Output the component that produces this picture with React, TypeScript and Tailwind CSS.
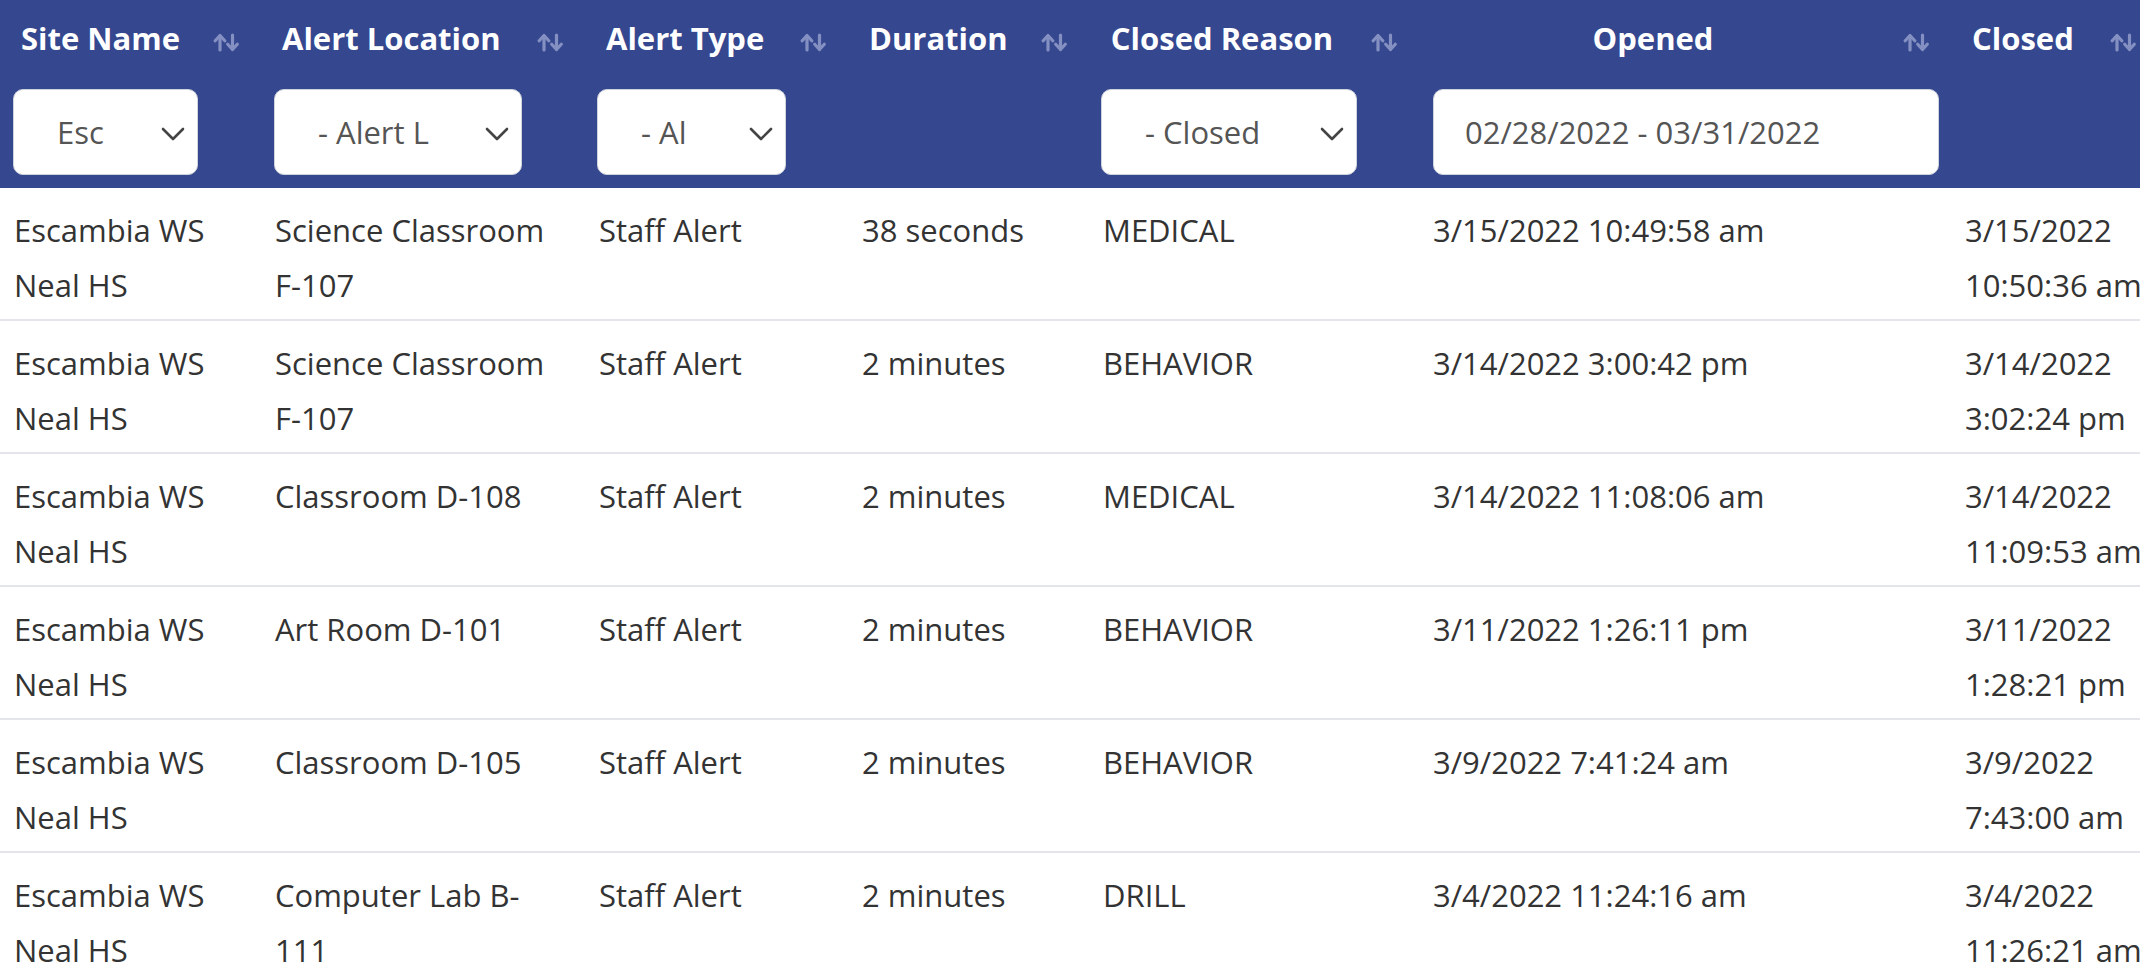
import React from 'react';

type Alert = {
  site: string;
  location: string;
  type: string;
  duration: string;
  reason: string;
  opened: string;
  closed: string;
};

const alerts: Alert[] = [
  { site: 'Escambia WS Neal HS', location: 'Science Classroom F-107', type: 'Staff Alert', duration: '38 seconds', reason: 'MEDICAL', opened: '3/15/2022 10:49:58 am', closed: '3/15/2022 10:50:36 am' },
  { site: 'Escambia WS Neal HS', location: 'Science Classroom F-107', type: 'Staff Alert', duration: '2 minutes', reason: 'BEHAVIOR', opened: '3/14/2022 3:00:42 pm', closed: '3/14/2022 3:02:24 pm' },
  { site: 'Escambia WS Neal HS', location: 'Classroom D-108', type: 'Staff Alert', duration: '2 minutes', reason: 'MEDICAL', opened: '3/14/2022 11:08:06 am', closed: '3/14/2022 11:09:53 am' },
  { site: 'Escambia WS Neal HS', location: 'Art Room D-101', type: 'Staff Alert', duration: '2 minutes', reason: 'BEHAVIOR', opened: '3/11/2022 1:26:11 pm', closed: '3/11/2022 1:28:21 pm' },
  { site: 'Escambia WS Neal HS', location: 'Classroom D-105', type: 'Staff Alert', duration: '2 minutes', reason: 'BEHAVIOR', opened: '3/9/2022 7:41:24 am', closed: '3/9/2022 7:43:00 am' },
  { site: 'Escambia WS Neal HS', location: 'Computer Lab B-111', type: 'Staff Alert', duration: '2 minutes', reason: 'DRILL', opened: '3/4/2022 11:24:16 am', closed: '3/4/2022 11:26:21 am' },
];

const columns = [
  { label: 'Site Name', width: 'w-[261px]' },
  { label: 'Alert Location', width: 'w-[324px]' },
  { label: 'Alert Type', width: 'w-[263px]' },
  { label: 'Duration', width: 'w-[241px]' },
  { label: 'Closed Reason', width: 'w-[330px]' },
  { label: 'Opened', width: 'w-[532px]' },
  { label: 'Closed', width: 'w-[207px]' },
];

function SortIcon() {
  return (
    <svg width="27" height="19" viewBox="0 0 27 19" className="absolute right-[21px] top-[33px]">
      <g fill="none" stroke="#8590c2" strokeWidth="3.2" strokeLinecap="round" strokeLinejoin="round">
        <path d="M7 17V3" />
        <path d="M2.2 7.8L7 2.5l4.8 5.3" />
        <path d="M19.5 2v14" />
        <path d="M14.7 11.2l4.8 5.3 4.8-5.3" />
      </g>
    </svg>
  );
}

function FilterSelect({ value, box }: { value: string; box: string }) {
  return (
    <div className={`relative flex h-[86px] items-center rounded-[10px] border border-[#cfd3dc] bg-white pl-[43px] text-[#555] ${box}`}>
      <span className="whitespace-nowrap">{value}</span>
      <svg width="24" height="14" viewBox="0 0 24 14" className="absolute right-[12px] top-[37px]">
        <path d="M2 2l10 10L22 2" fill="none" stroke="#444" strokeWidth="2.6" strokeLinecap="round" strokeLinejoin="round" />
      </svg>
    </div>
  );
}

export default function App() {
  return (
    <div className="w-full overflow-hidden bg-white font-['Open_Sans',sans-serif] text-[31px]">
      <table className="w-[2158px] table-fixed">
        <colgroup>
          {columns.map((c) => (
            <col key={c.label} className={c.width} />
          ))}
        </colgroup>
        <thead className="bg-[#34478f] text-white">
          <tr>
            {columns.map((c) => (
              <th key={c.label} className="relative whitespace-nowrap pt-[16px] pb-[16px] pl-[21px] pr-[85px] text-center font-bold leading-[44px]">
                {c.label}
                <SortIcon />
              </th>
            ))}
          </tr>
          <tr>
            <th className="px-[13px] pt-[13px] pb-[13px] text-left font-normal">
              <FilterSelect value="Esc" box="w-[185px]" />
            </th>
            <th className="px-[13px] pt-[13px] pb-[13px] text-left font-normal">
              <FilterSelect value="- Alert L" box="w-[248px]" />
            </th>
            <th className="px-[12px] pt-[13px] pb-[13px] text-left font-normal">
              <FilterSelect value="- Al" box="w-[189px]" />
            </th>
            <th className="pt-[13px] pb-[13px]" />
            <th className="px-[12px] pt-[13px] pb-[13px] text-left font-normal">
              <FilterSelect value="- Closed" box="w-[256px]" />
            </th>
            <th className="px-[14px] pt-[13px] pb-[13px] text-left font-normal">
              <div className="flex h-[86px] w-[506px] items-center rounded-[10px] border border-[#cfd3dc] bg-white pl-[31px] text-[#555]">
                02/28/2022 - 03/31/2022
              </div>
            </th>
            <th className="pt-[13px] pb-[13px]" />
          </tr>
        </thead>
        <tbody className="text-[#333]">
          {alerts.map((a, i) => (
            <tr key={i} className="border-b-2 border-[#e3e5ea]">
              <td className="pt-[15px] pb-[6px] pl-[14px] pr-[28px] align-top leading-[55px]">{a.site}</td>
              <td className="pt-[15px] pb-[6px] pl-[14px] pr-[28px] align-top leading-[55px]">{a.location}</td>
              <td className="pt-[15px] pb-[6px] pl-[14px] pr-[28px] align-top leading-[55px]">{a.type}</td>
              <td className="pt-[15px] pb-[6px] pl-[14px] pr-[28px] align-top leading-[55px]">{a.duration}</td>
              <td className="pt-[15px] pb-[6px] pl-[14px] pr-[28px] align-top leading-[55px]">{a.reason}</td>
              <td className="pt-[15px] pb-[6px] pl-[14px] pr-[28px] align-top leading-[55px]">{a.opened}</td>
              <td className="pt-[15px] pb-[6px] pl-[14px] pr-[4px] align-top leading-[55px]">{a.closed}</td>
            </tr>
          ))}
        </tbody>
      </table>
    </div>
  );
}
